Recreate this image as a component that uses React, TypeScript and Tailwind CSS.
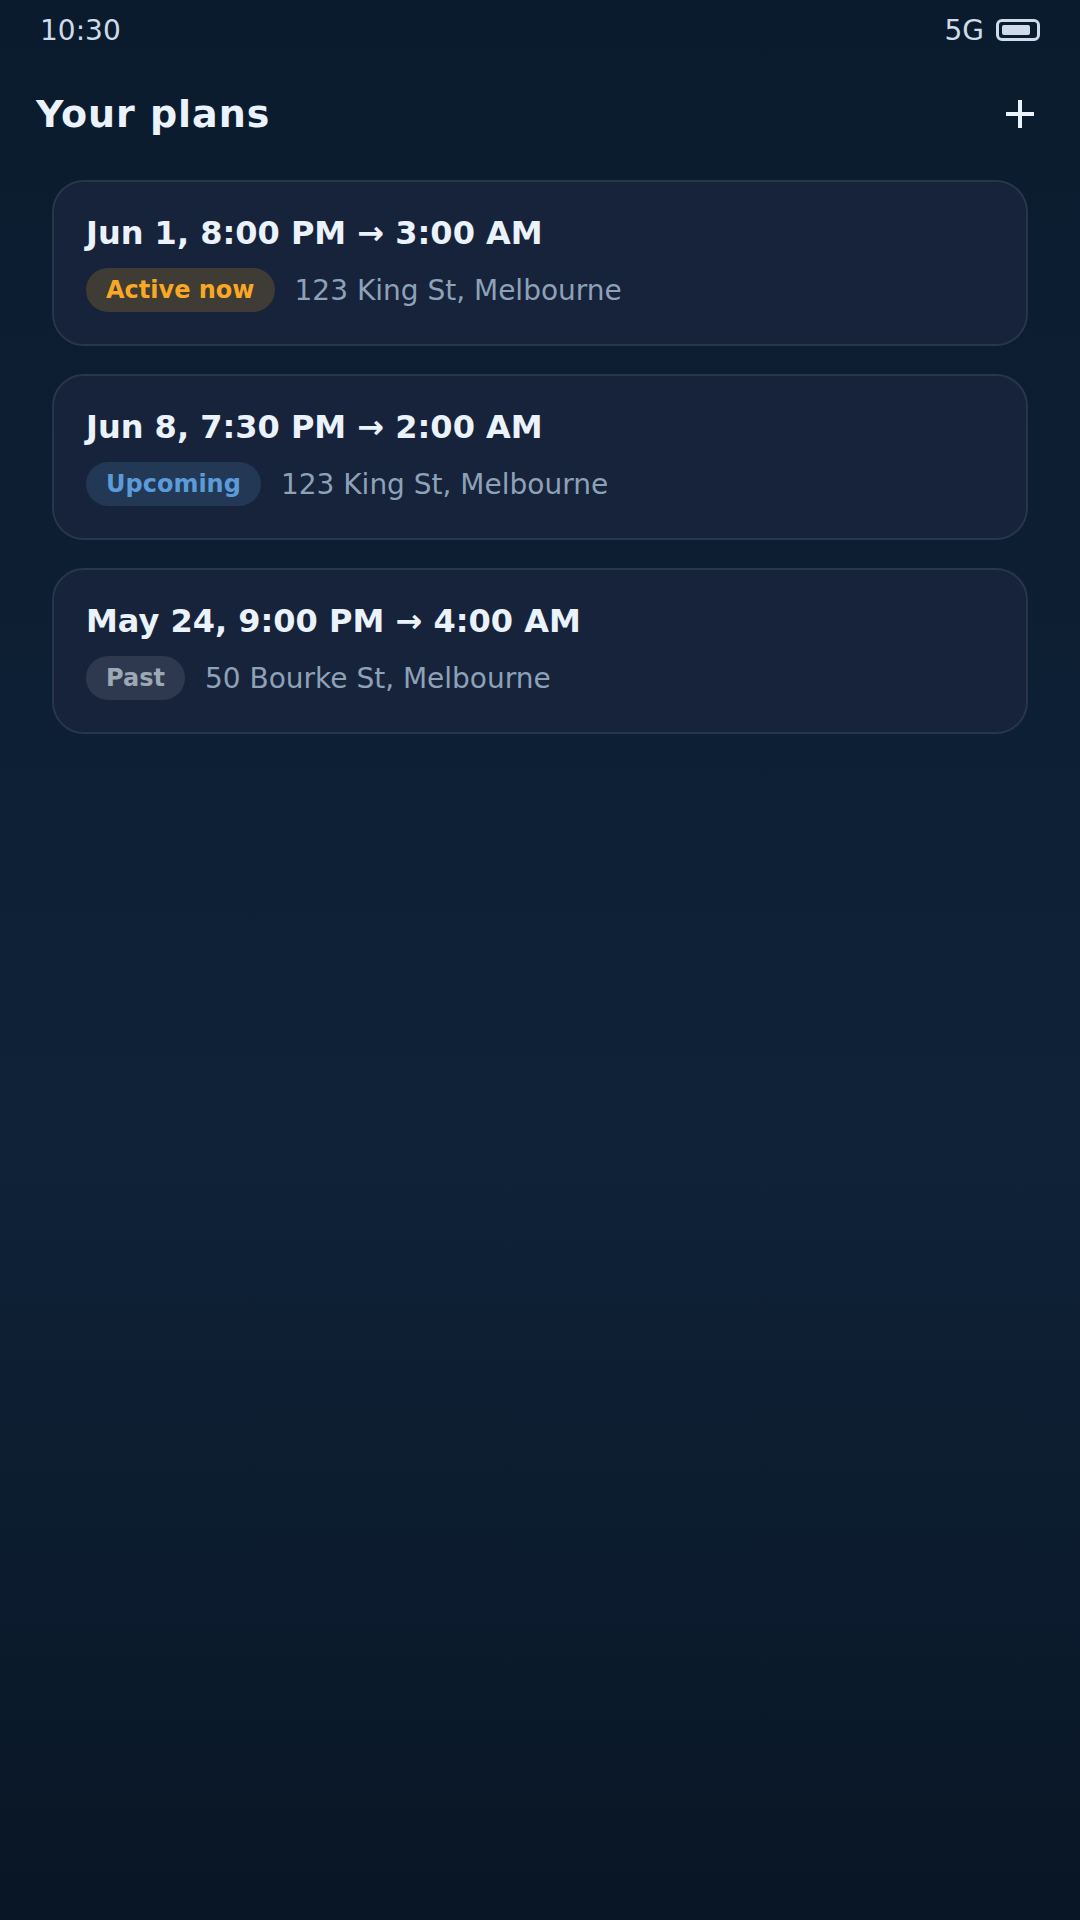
import { useState } from 'react';

type PlanStatus = 'active' | 'upcoming' | 'past';

interface Plan {
  id: number;
  time: string;
  address: string;
  status: PlanStatus;
}

const initialPlans: Plan[] = [
  { id: 1, time: 'Jun 1, 8:00 PM → 3:00 AM', address: '123 King St, Melbourne', status: 'active' },
  { id: 2, time: 'Jun 8, 7:30 PM → 2:00 AM', address: '123 King St, Melbourne', status: 'upcoming' },
  { id: 3, time: 'May 24, 9:00 PM → 4:00 AM', address: '50 Bourke St, Melbourne', status: 'past' },
];

const badges: Record<PlanStatus, { label: string; className: string }> = {
  active: { label: 'Active now', className: 'bg-[#3f3b35] text-[#f9a825]' },
  upcoming: { label: 'Upcoming', className: 'bg-[#223854] text-[#5b9bd9]' },
  past: { label: 'Past', className: 'bg-[#2e394f] text-[#9ca8b4]' },
};

function StatusBar() {
  return (
    <div className="flex h-15 items-center justify-between px-10 text-[28px] leading-[33px] text-[#cfdbe9]">
      <span>10:30</span>
      <div className="flex items-center gap-3">
        <span>5G</span>
        <svg width="44" height="22" viewBox="0 0 44 22" fill="none" aria-hidden="true">
          <rect x="1.5" y="1.5" width="41" height="19" rx="4.5" stroke="currentColor" strokeWidth="3" />
          <rect x="6" y="6" width="28" height="10" rx="2" fill="currentColor" />
        </svg>
      </div>
    </div>
  );
}

function PlanCard({ plan }: { plan: Plan }) {
  const badge = badges[plan.status];

  return (
    <li className="flex flex-col gap-4 rounded-[32px] border-2 border-[#28354b] bg-[#17233a] p-8">
      <h2 className="text-[32px] font-bold leading-[38px] text-[#eaf2fb]">{plan.time}</h2>
      <div className="flex items-center gap-5">
        <span className={`rounded-full px-5 py-2 text-2xl leading-7 font-bold ${badge.className}`}>
          {badge.label}
        </span>
        <span className="text-[28px] leading-[33px] text-[#8da2b8]">{plan.address}</span>
      </div>
    </li>
  );
}

export default function App() {
  const [plans, setPlans] = useState<Plan[]>(initialPlans);

  const handleAdd = () => {
    // New plans start as a copy of the latest upcoming one
    const upcoming = plans.find((plan) => plan.status === 'upcoming');
    if (upcoming) {
      setPlans([...plans, { ...upcoming, id: plans.length + 1 }]);
    }
  };

  return (
    <div className="min-h-screen bg-linear-[180deg,#0b1b2e_0%,#0f2238_60%,#091625_100%] font-['DejaVu_Sans',sans-serif]">
      <StatusBar />

      <header className="flex items-center justify-between px-9 pt-[30px]">
        <h1 className="text-[38px] font-bold leading-12 tracking-wide text-[#eaf2fb]">Your plans</h1>
        <button
          type="button"
          aria-label="Add plan"
          onClick={handleAdd}
          className="flex size-12 cursor-pointer items-center justify-center text-[#eaf2fb]"
        >
          <svg width="28" height="28" viewBox="0 0 28 28" stroke="currentColor" strokeWidth="4" aria-hidden="true">
            <path d="M14 0v28M0 14h28" />
          </svg>
        </button>
      </header>

      <main className="px-[52px] pt-[42px] pb-10">
        <ul className="flex flex-col gap-7">
          {plans.map((plan) => (
            <PlanCard key={plan.id} plan={plan} />
          ))}
        </ul>
      </main>
    </div>
  );
}
